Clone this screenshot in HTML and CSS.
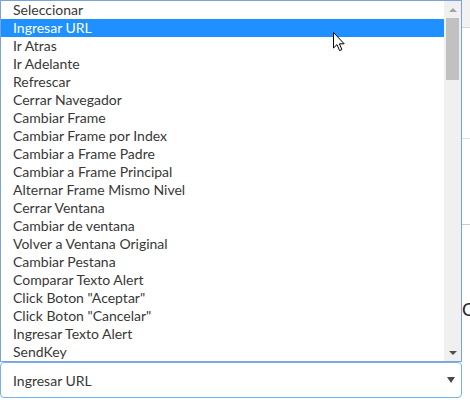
FILE: index.html
```html
<!DOCTYPE html>
<html lang="es">
<head>
<meta charset="utf-8">
<title>Seleccionar acción</title>
<link rel="stylesheet" href="styles.css">
</head>
<body>
<div class="page">
  <div class="main">
    <div class="listbox">
      <ul class="options">
        <li>Seleccionar</li>
        <li class="selected">Ingresar URL</li>
        <li>Ir Atras</li>
        <li>Ir Adelante</li>
        <li>Refrescar</li>
        <li>Cerrar Navegador</li>
        <li>Cambiar Frame</li>
        <li>Cambiar Frame por Index</li>
        <li>Cambiar a Frame Padre</li>
        <li>Cambiar a Frame Principal</li>
        <li>Alternar Frame Mismo Nivel</li>
        <li>Cerrar Ventana</li>
        <li>Cambiar de ventana</li>
        <li>Volver a Ventana Original</li>
        <li>Cambiar Pestana</li>
        <li>Comparar Texto Alert</li>
        <li>Click Boton "Aceptar"</li>
        <li>Click Boton "Cancelar"</li>
        <li>Ingresar Texto Alert</li>
        <li>SendKey</li>
      </ul>
      <div class="scrollbar">
        <div class="arrow up"></div>
        <div class="track"><div class="thumb"></div></div>
        <div class="arrow down"></div>
      </div>
    </div>
    <div class="select">
      <span class="select-value">Ingresar URL</span>
      <span class="select-caret"></span>
    </div>
  </div>
  <div class="side">
    <div class="side-header"></div>
    <div class="side-block first"></div>
    <div class="side-block second"></div>
    <div class="side-text">C</div>
  </div>
  <svg class="cursor" width="13" height="20" viewBox="0 0 13 20" aria-hidden="true">
    <path d="M0.5 0.5 L0.5 16 L4 12.6 L6.6 18.6 L8.9 17.6 L6.4 11.8 L11.2 11.8 Z" fill="#fff" stroke="#000" stroke-width="1" stroke-linejoin="miter"/>
  </svg>
</div>
</body>
</html>
```

FILE: styles.css
```css
html, body {
  margin: 0;
  padding: 0;
  background: #ffffff;
}

body {
  font-family: Lato, "Liberation Sans", sans-serif;
  font-size: 14px;
  color: #333333;
}

.page {
  position: relative;
  display: grid;
  grid-template-columns: 462px 1fr;
  width: 470px;
  height: 410px;
  overflow: hidden;
}

.main {
  display: flex;
  flex-direction: column;
}

.listbox {
  display: flex;
  height: 362px;
  box-sizing: border-box;
  border: 1px solid #7aa3dd;
  background: #ffffff;
}

.options {
  flex: 1;
  list-style: none;
  margin: 0;
  padding: 0;
}

.options li {
  height: 18px;
  line-height: 18px;
  padding-left: 12px;
  white-space: nowrap;
  color: #383838;
}

.options li.selected {
  background: #1e90ff;
  color: #ffffff;
}

.scrollbar {
  width: 17px;
  display: flex;
  flex-direction: column;
  background: #f0f0f0;
}

.arrow {
  height: 17px;
  display: flex;
  align-items: center;
  justify-content: center;
}

.arrow::before {
  content: "";
  width: 0;
  height: 0;
  border-left: 4px solid transparent;
  border-right: 4px solid transparent;
}

.arrow.up::before {
  border-bottom: 4px solid #a3a3a3;
}

.arrow.down::before {
  border-top: 4px solid #505050;
}

.track {
  flex: 1;
  padding: 0 2px;
}

.thumb {
  height: 62px;
  background: #c1c1c1;
}

.select {
  display: flex;
  align-items: center;
  justify-content: space-between;
  height: 36px;
  box-sizing: border-box;
  border: 1px solid #74b3ea;
  border-radius: 4px;
  padding: 0 6px 0 12px;
  background: #ffffff;
}

.select-value {
  color: #383838;
}

.select-caret {
  width: 0;
  height: 0;
  border-left: 4px solid transparent;
  border-right: 4px solid transparent;
  border-top: 6px solid #4a4a4a;
}

.side {
  display: flex;
  flex-direction: column;
}

.side-header {
  height: 27px;
  background: #f2f2f2;
  border-bottom: 1px solid #d6d6d6;
}

.side-block.first {
  height: 110px;
  border-bottom: 1px solid #d3e3ec;
}

.side-block.second {
  height: 85px;
  border-bottom: 1px solid #cccccc;
}

.side-text {
  margin-top: 74px;
  font-size: 18px;
  line-height: 20px;
  color: #222222;
  white-space: nowrap;
}

.cursor {
  position: absolute;
  left: 333px;
  top: 32px;
}
```
